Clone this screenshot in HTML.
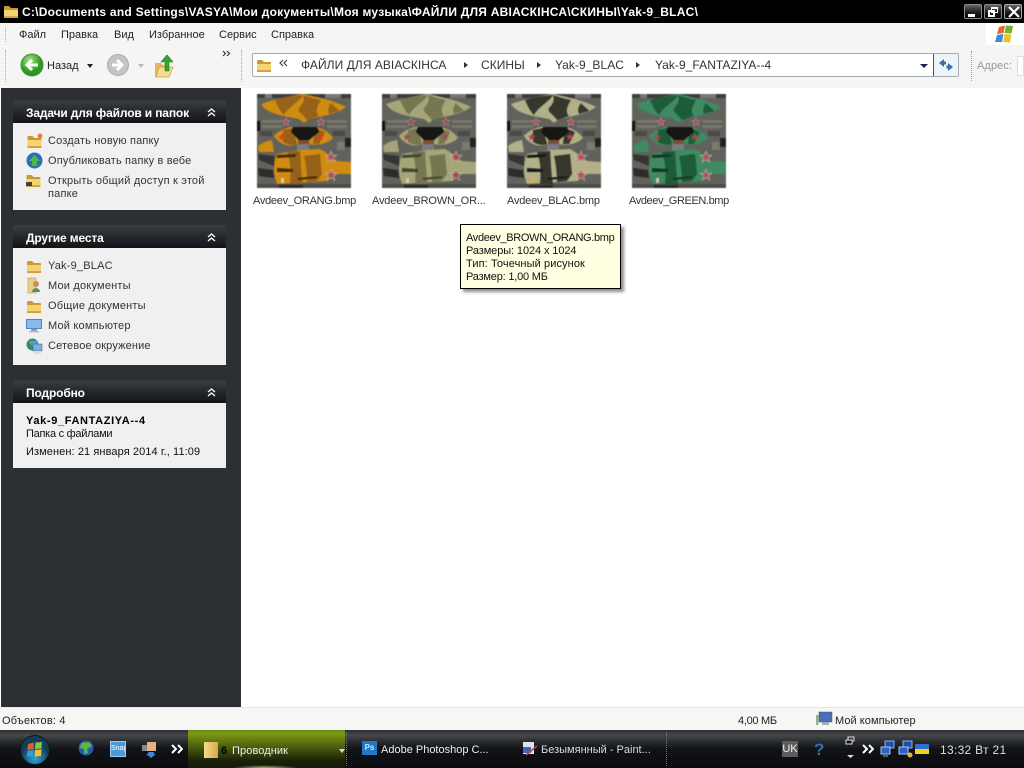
<!DOCTYPE html>
<html><head><meta charset="utf-8"><style>
html,body{margin:0;padding:0;width:1024px;height:768px;overflow:hidden;background:#fff}
body{position:relative;font:11px "Liberation Sans","Noto Sans CJK SC",sans-serif;color:#222}
.a,.t{position:absolute}
.t{white-space:nowrap;line-height:13px;margin-top:1px}
.h{position:absolute;left:13px;width:213px;height:23px;background:linear-gradient(#3a3e44,#25282d 50%,#121417)}
.ht{position:absolute;left:13px;top:6px;color:#fff;font-weight:bold;font-size:12px;letter-spacing:-.15px;white-space:nowrap;line-height:14px}
.b{position:absolute;left:13px;width:213px;background:#f0f0f0}
svg.a{overflow:visible}
.th{filter:blur(.5px)}
.w{position:absolute;top:4px;width:18px;height:15px;background:linear-gradient(#666,#222 50%,#000);border:1px solid #888;box-sizing:border-box;border-radius:2px}
.ad{font-size:12px;letter-spacing:.05px;color:#333}
</style></head><body>
<svg width="0" height="0" style="position:absolute"><defs>
<symbol id="fold" viewBox="0 0 16 16"><path d="M1 4q0-1 1-1h4l2 2h6q1 0 1 1v9H1z" fill="#c99a34"/><path d="M1 7h14v6.500q0 1-1 1H2q-1 0-1-1z" fill="#f3d472"/><path d="M1 13h14v1.500H1z" fill="#d8a83c"/></symbol>
<symbol id="dch" viewBox="0 0 12 10"><path d="M1 1L5 5 1 9M7 1L11 5 7 9" fill="none" stroke="#fff" stroke-width="2"/></symbol>
<symbol id="up" viewBox="0 0 9 9"><path d="M1 4L4.500 1 8 4M1 8L4.500 5 8 8" fill="none" stroke="#fff" stroke-width="1.300"/></symbol>
<path id="star" d="M0-5L1.500-1.500 5-1.500 2.200.8 3.200 4.500 0 2.200-3.200 4.500-2.200.8-5-1.500-1.500-1.500Z"/>
<symbol id="skin" viewBox="0 0 94 94">
<rect width="94" height="94" fill="#62625c"/>
<rect y="0" width="94" height="4" fill="#3c3c3a"/><rect x="8" width="7" height="4" fill="#77777a"/><rect x="68" width="16" height="4" fill="#77777a"/>
<rect x="5" y="26" width="20" height="8" fill="#77766a"/><rect x="70" y="26" width="20" height="8" fill="#77766a"/>
<path d="M5 30h20M70 30h20" stroke="#4a4a44"/>
<rect x="0" y="27" width="3" height="10" fill="#111"/><rect x="88" y="44" width="6" height="9" fill="#222"/>
<rect x="76" y="37" width="12" height="5" fill="#4a4a46"/><rect x="3" y="37" width="12" height="5" fill="#4a4a46"/><rect x="80" y="48" width="8" height="8" fill="#7a7a72"/>
<path d="M4 10C18 5 33 2 46 0C60 3 76 6 89 13C80 20 66 22 52 25L47 29L42 25C26 22 10 20 4 10Z" style="fill:var(--a)"/>
<path d="M18 6C25 3 38 2 46 1C42 8 32 12 27 21C22 16 20 10 18 6ZM46 1C52 3 58 5 64 6C60 12 58 18 62 22L50 26C46 20 40 18 42 14C46 10 48 6 46 1ZM74 9C76 12 80 14 82 17L72 20C70 15 72 12 74 9Z" style="fill:var(--b)"/>
<path d="M17 42C22 36 32 32 38 33L47 44L56 33C64 33 72 38 76 44C70 50 60 52 52 50L47 52L40 50C32 54 22 50 17 42Z" style="fill:var(--a)"/>
<path d="M26 36L36 34L40 50C34 52 30 50 26 48ZM58 34L68 38L62 50L56 50Z" style="fill:var(--b)"/>
<path d="M36 33L60 33L62 38L52 46L47 50L42 46L34 38Z" fill="#161614"/>
<rect x="41" y="46" width="11" height="4" fill="#7a5130"/><rect x="40" y="50" width="12" height="8" fill="#7a7b7e"/>
<path d="M1 52C6 48 11 47 15 46L17 58L2 58Z" style="fill:var(--a)"/><path d="M1 60L17 62V72L2 66Z" fill="#343432"/><path d="M1 74L16 76 17 84 2 82Z" fill="#2c2c2a"/>
<path d="M20 60L44 56L63 55L68 58L80 67L94 68V80H80L70 87L20 90C16 80 16 70 20 60Z" style="fill:var(--a)"/>
<path d="M30 58L43 57C44 68 44 80 46 90L33 90C34 80 34 68 30 58ZM47 62L63 60L65 80L60 87L50 88C50 80 49 70 47 62Z" style="fill:var(--b)"/>
<path d="M20 61L40 60 38 63 20 64ZM20 74L36 75 36 78 20 78ZM40 84L60 82 60 84 42 86Z" style="fill:var(--c)"/>
<rect y="90" width="94" height="4" fill="#4c4c48"/><rect x="22" y="91" width="24" height="3" fill="#2a2a28"/>
<use href="#star" transform="translate(29 28) scale(.85)" style="fill:var(--s)" stroke="#b9a8a0" stroke-width=".5"/>
<use href="#star" transform="translate(64 28) scale(.85)" style="fill:var(--s)" stroke="#b9a8a0" stroke-width=".5"/>
<use href="#star" transform="translate(25 43) scale(.8)" style="fill:var(--r)"/>
<use href="#star" transform="translate(63 43) scale(.8)" style="fill:var(--r)"/>
<use href="#star" transform="translate(74 63) scale(1.150)" style="fill:var(--s)" stroke="#d0c0b8" stroke-width=".5"/>
<use href="#star" transform="translate(74 81) scale(1.150)" style="fill:var(--s)" stroke="#d0c0b8" stroke-width=".5"/>
<rect x="24" y="84" width="3" height="5" style="fill:var(--w)"/>
</symbol>
</defs></svg>

<!-- Title bar -->
<div class="a" style="left:0;top:0;width:1024px;height:23px;background:#000"></div>
<svg class="a" style="left:3px;top:3px" width="16" height="16"><use href="#fold"/></svg>
<div class="t" style="left:22px;top:5px;color:#fff;font-weight:bold;font-size:12px;letter-spacing:.25px">C:\Documents and Settings\VASYA\Мои документы\Моя музыка\ФАЙЛИ ДЛЯ АВIАСКIНСА\СКИНЫ\Yak-9_BLAC\</div>
<div class="w" style="left:964px"><div class="a" style="left:3px;top:9px;width:7px;height:3px;background:#fff"></div></div>
<div class="w" style="left:984px"><div class="a" style="left:3px;top:5px;width:7px;height:7px;box-sizing:border-box;border:2px solid #fff"></div><div class="a" style="left:6px;top:2px;width:7px;height:6px;box-sizing:border-box;border:1px solid #fff;border-top-width:2px"></div></div>
<div class="w" style="left:1004px;border-color:#aaa"><svg class="a" style="left:3px;top:1px" width="12" height="12"><path d="M1 1L11 11M11 1L1 11" stroke="#fff" stroke-width="2.200"/></svg></div>

<!-- Menu & toolbar -->
<div class="a" style="left:0;top:23px;width:1024px;height:65px;background:#f5f5f4"></div>
<div class="a" style="left:5px;top:27px;height:15px;border-left:1px dotted #aaa"></div>
<div class="a" style="left:5px;top:50px;height:32px;border-left:1px dotted #aaa"></div>
<div class="a" style="left:241px;top:50px;height:32px;border-left:1px dotted #aaa"></div>
<div class="t" style="left:19px;top:28px">Файл</div>
<div class="t" style="left:61px;top:28px">Правка</div>
<div class="t" style="left:114px;top:28px">Вид</div>
<div class="t" style="left:149px;top:28px">Избранное</div>
<div class="t" style="left:219px;top:28px">Сервис</div>
<div class="t" style="left:271px;top:28px">Справка</div>
<div class="a" style="left:986px;top:23px;width:38px;height:22px;background:#fff"></div>
<svg class="a" style="left:995px;top:24px" width="20" height="20" viewBox="0 0 20 20"><path d="M4 3L10 1.500 8.500 9 2 10Z" fill="#e8632a"/><path d="M11 1.500L18 2 16.500 9.500 9.500 9Z" fill="#6fb23a"/><path d="M2 11L8.500 10 7 18 0 18Z" fill="#3a8bd8"/><path d="M9.500 10L16.500 10.500 15 18.500 8 18Z" fill="#f4bf2c"/></svg>

<svg class="a" style="left:20px;top:53px" width="24" height="24"><defs><radialGradient id="g1" cx=".4" cy=".3"><stop offset="0" stop-color="#a8e680"/><stop offset="1" stop-color="#2a9a20"/></radialGradient></defs><circle cx="12" cy="12" r="11" fill="url(#g1)" stroke="#4a8a40"/><path d="M18 12H8M12 7l-5 5 5 5" stroke="#fff" stroke-width="3" fill="none"/></svg>
<div class="t" style="left:47px;top:59px">Назад</div>
<div class="a" style="left:87px;top:64px;border:3px solid transparent;border-top:4px solid #222"></div>
<svg class="a" style="left:107px;top:54px" width="22" height="22"><circle cx="11" cy="11" r="10.500" fill="#c4c4c4" stroke="#aaa"/><path d="M5 11H14M10 6l5 5-5 5" stroke="#fff" stroke-width="3" fill="none"/></svg>
<div class="a" style="left:138px;top:64px;border:3px solid transparent;border-top:4px solid #bbb"></div>
<svg class="a" style="left:154px;top:54px" width="20" height="24" viewBox="0 0 20 24"><path d="M1 9h6l2 2h5l-1 12H1z" fill="#e2bb58"/><path d="M2 23l3-10h14l-4 10z" fill="#f6dd8e" stroke="#c79c3a" stroke-width=".7"/><path d="M11 17V8H7l6-7 6 7h-4v9z" fill="#36a52c" stroke="#1f7a20" stroke-width=".6"/></svg>
<svg class="a" style="left:223px;top:51px" width="7" height="5"><path d="M0 0L2.500 2.500 0 5M4 0L6.500 2.500 4 5" fill="none" stroke="#333" stroke-width="1.200"/></svg>

<!-- Address bar -->
<div class="a" style="left:252px;top:53px;width:707px;height:24px;box-sizing:border-box;background:#fff;border:1px solid #a3abb3;border-radius:2px"></div>
<svg class="a" style="left:256px;top:57px" width="16" height="16"><use href="#fold"/></svg>
<svg class="a" style="left:279px;top:60px" width="8" height="6"><path d="M4 0L1 3 4 6M8 0L5 3 8 6" fill="none" stroke="#444" stroke-width="1.200"/></svg>
<div class="t ad" style="left:301px;top:58px">ФАЙЛИ ДЛЯ АВIАСКIНСА</div>
<div class="a" style="left:464px;top:62px;border:3px solid transparent;border-left:4px solid #333"></div>
<div class="t ad" style="left:481px;top:58px">СКИНЫ</div>
<div class="a" style="left:537px;top:62px;border:3px solid transparent;border-left:4px solid #333"></div>
<div class="t ad" style="left:555px;top:58px">Yak-9_BLAC</div>
<div class="a" style="left:636px;top:62px;border:3px solid transparent;border-left:4px solid #333"></div>
<div class="t ad" style="left:655px;top:58px">Yak-9_FANTAZIYA--4</div>
<div class="a" style="left:920px;top:64px;border:4px solid transparent;border-top:4px solid #12205a"></div>
<div class="a" style="left:933px;top:54px;width:24px;height:22px;background:#eef3f7;border-left:1px solid #456"></div>
<svg class="a" style="left:938px;top:58px" width="16" height="14"><path d="M1 5L6 1V3.500H8V6.500H6V9Z" fill="#3a6cb0"/><path d="M15 9L10 13V10.500H8.500V7.500H10V5Z" fill="#3a6cb0"/></svg>
<div class="a" style="left:971px;top:51px;height:30px;border-left:1px dotted #999"></div>
<div class="t" style="left:977px;top:59px;color:#999;letter-spacing:.1px">Адрес:</div>
<div class="a" style="left:1017px;top:56px;width:7px;height:20px;background:#fff;border:1px solid #ddd;box-sizing:border-box"></div>

<!-- Sidebar -->
<div class="a" style="left:1px;top:88px;width:240px;height:619px;background:#2c2f34"></div>
<div class="h" style="top:100px"><div class="ht">Задачи для файлов и папок</div></div>
<svg class="a" style="left:207px;top:108px" width="9" height="9"><use href="#up"/></svg>
<div class="b" style="top:123px;height:87px"></div>
<svg class="a" style="left:26px;top:133px" width="17" height="16"><use href="#fold"/><circle cx="14" cy="3" r="2.500" fill="#f08030"/></svg>
<div class="t" style="left:48px;top:134px;letter-spacing:.18px;color:#333">Создать новую папку</div>
<svg class="a" style="left:26px;top:152px" width="17" height="17"><circle cx="8.500" cy="8.500" r="8" fill="#2a6fb8"/><path d="M8.500 3L14 9H11V14H6V9H3Z" fill="#4cb848"/></svg>
<div class="t" style="left:48px;top:154px;letter-spacing:.16px;color:#333">Опубликовать папку в вебе</div>
<svg class="a" style="left:25px;top:172px" width="17" height="16"><use href="#fold"/><rect x="1" y="10" width="6" height="4" fill="#444"/></svg>
<div class="t" style="left:48px;top:174px;letter-spacing:.2px;color:#333">Открыть общий доступ к этой</div>
<div class="t" style="left:48px;top:187px;letter-spacing:.2px;color:#333">папке</div>

<div class="h" style="top:225px"><div class="ht">Другие места</div></div>
<svg class="a" style="left:207px;top:233px" width="9" height="9"><use href="#up"/></svg>
<div class="b" style="top:248px;height:117px"></div>
<svg class="a" style="left:26px;top:258px" width="16" height="16"><use href="#fold"/></svg>
<div class="t" style="left:48px;top:259px;letter-spacing:.2px;color:#333">Yak-9_BLAC</div>
<svg class="a" style="left:26px;top:277px" width="16" height="17"><path d="M2 1h8v15H2z" fill="#e8cf8a" stroke="#c6a95c" stroke-width=".7"/><circle cx="10" cy="7" r="3" fill="#c09060"/><path d="M6 15c0-5 8-5 8 0z" fill="#5a8a70"/></svg>
<div class="t" style="left:48px;top:279px;letter-spacing:.2px;color:#333">Мои документы</div>
<svg class="a" style="left:26px;top:298px" width="16" height="16"><use href="#fold"/></svg>
<div class="t" style="left:48px;top:299px;letter-spacing:.2px;color:#333">Общие документы</div>
<svg class="a" style="left:26px;top:318px" width="16" height="15"><rect x="0" y="1" width="16" height="10" fill="#4b86c8"/><rect x="1" y="2" width="14" height="8" fill="#8cb8e4"/><rect x="5" y="11" width="6" height="2" fill="#9a9a9a"/><rect x="3" y="13" width="10" height="1.500" fill="#bbb"/></svg>
<div class="t" style="left:48px;top:319px;letter-spacing:.2px;color:#333">Мой компьютер</div>
<svg class="a" style="left:26px;top:338px" width="17" height="17"><circle cx="6.500" cy="6.500" r="6" fill="#3c8a5a"/><path d="M2 3C5 2 8 4 11 2L12 7 7 9Z" fill="#4ba0e0"/><rect x="7" y="6" width="9" height="7" fill="#7ab0e8" stroke="#456" stroke-width=".5"/><rect x="8" y="13" width="7" height="3" fill="#dde"/></svg>
<div class="t" style="left:48px;top:339px;letter-spacing:.15px;color:#333">Сетевое окружение</div>

<div class="h" style="top:380px"><div class="ht">Подробно</div></div>
<svg class="a" style="left:207px;top:388px" width="9" height="9"><use href="#up"/></svg>
<div class="b" style="top:403px;height:65px"></div>
<div class="t" style="left:26px;top:414px;font-weight:bold;letter-spacing:.64px;color:#000">Yak-9_FANTAZIYA--4</div>
<div class="t" style="left:26px;top:427px;color:#111;letter-spacing:-.27px">Папка с файлами</div>
<div class="t" style="left:26px;top:445px;color:#111;letter-spacing:.09px">Изменен: 21 января 2014 г., 11:09</div>

<!-- Thumbnails -->
<svg class="a th" style="left:257px;top:94px;--a:#d08c10;--b:#96621a;--c:#4a2a0a;--s:#b0505a;--r:#d8401c;--w:#e8c8a0" width="94" height="94"><use href="#skin"/></svg>
<svg class="a th" style="left:382px;top:94px;--a:#a5a678;--b:#767750;--c:#44452e;--s:#a04a50;--r:#a04a50;--w:#d8c8a0" width="94" height="94"><use href="#skin"/></svg>
<svg class="a th" style="left:507px;top:94px;--a:#b2b088;--b:#36372c;--c:#1c1c16;--s:#b4505a;--r:#b0404a;--w:#e0b030" width="94" height="94"><use href="#skin"/></svg>
<svg class="a th" style="left:632px;top:94px;--a:#3f8a62;--b:#1d5c38;--c:#123a24;--s:#b0505a;--r:#a84a4a;--w:#d0c8a0" width="94" height="94"><use href="#skin"/></svg>
<div class="t" style="left:253px;top:194px;letter-spacing:-.28px;color:#333">Avdeev_ORANG.bmp</div>
<div class="t" style="left:372px;top:194px;letter-spacing:-.17px;color:#333">Avdeev_BROWN_OR...</div>
<div class="t" style="left:507px;top:194px;letter-spacing:-.2px;color:#333">Avdeev_BLAC.bmp</div>
<div class="t" style="left:629px;top:194px;letter-spacing:-.4px;color:#333">Avdeev_GREEN.bmp</div>

<!-- Tooltip -->
<div class="a" style="left:460px;top:224px;width:161px;height:65px;box-sizing:border-box;background:#ffffe1;border:1px solid #000;box-shadow:3px 3px 3px rgba(0,0,0,.45)"></div>
<div class="t" style="left:466px;top:231px;color:#111;letter-spacing:-.33px">Avdeev_BROWN_ORANG.bmp</div>
<div class="t" style="left:466px;top:244px;color:#111;letter-spacing:-.1px">Размеры: 1024 x 1024</div>
<div class="t" style="left:466px;top:257px;color:#111;letter-spacing:.1px">Тип: Точечный рисунок</div>
<div class="t" style="left:466px;top:270px;color:#111;letter-spacing:-.2px">Размер: 1,00 МБ</div>

<!-- Status bar -->
<div class="a" style="left:0;top:707px;width:1024px;height:23px;background:#f6f6f5;border-top:1px solid #e6e6e6;box-sizing:border-box"></div>
<div class="t" style="left:2px;top:714px;color:#222;letter-spacing:.2px">Объектов: 4</div>
<div class="t" style="left:738px;top:714px;color:#222;letter-spacing:-.3px">4,00 МБ</div>
<svg class="a" style="left:816px;top:711px" width="16" height="16"><rect x="0" y="4" width="2.500" height="10" fill="#8ab48a"/><rect x="3" y="1" width="13" height="10" fill="#4a6fb8" stroke="#556" stroke-width=".5"/><rect x="6" y="11" width="7" height="3" fill="#aaa"/></svg>
<div class="t" style="left:835px;top:714px;color:#222;letter-spacing:.05px">Мой компьютер</div>

<!-- Taskbar -->
<div class="a" style="left:0;top:730px;width:1024px;height:38px;background:linear-gradient(#2c2f32 0,#46494c 14%,#2a2c30 30%,#111317 50%,#0b0c10 100%)"></div>
<svg class="a" style="left:20px;top:735px" width="30" height="30" viewBox="0 0 30 30"><defs><radialGradient id="o" cx=".5" cy=".8"><stop offset="0" stop-color="#2ea6d8"/><stop offset="1" stop-color="#123c58"/></radialGradient></defs><circle cx="15" cy="15" r="14.500" fill="url(#o)" stroke="#0a1a24"/><path d="M8 9L14 7.500 13.500 14 7.500 15Z" fill="#e8592a"/><path d="M15.500 7.500L22 7 21.500 13.500 15 14Z" fill="#8cc63f"/><path d="M7.500 16L13.500 15 13 21 7 22Z" fill="#3a9ae0"/><path d="M15 15L21.500 14.500 21 21 14.500 21.500Z" fill="#f6c02c"/></svg>
<svg class="a" style="left:78px;top:740px" width="16" height="16"><circle cx="8" cy="8" r="7.500" fill="#2558b8"/><path d="M3 4C6 1 9 3 11 2L14 6 9 9 10 13 6 14 6 9 2 8Z" fill="#5cb840"/></svg>
<div class="a" style="left:110px;top:741px;width:16px;height:16px;background:#4a9bd8;border:1px solid #9ccbee;box-sizing:border-box;color:#fff;font-size:7px;line-height:13px;text-align:center;overflow:hidden">Snap</div>
<svg class="a" style="left:141px;top:741px" width="17" height="17"><rect x="1" y="4" width="5" height="6" fill="#888"/><rect x="6" y="1" width="9" height="9" fill="#e8b080"/><path d="M7 11h6v2h2l-5 4-5-4h2z" fill="#3a86d8"/></svg>
<svg class="a" style="left:171px;top:744px" width="12" height="10"><use href="#dch"/></svg>

<div class="a" style="left:188px;top:730px;width:157px;height:38px;background:linear-gradient(#6f8a12 0,#7c9a14 10%,#4a5c0c 45%,#1c220a 80%,#14180a 100%)"></div>
<div class="a" style="left:230px;top:765px;width:70px;height:3px;background:radial-gradient(ellipse at bottom,#a8b880,rgba(100,130,30,0) 70%)"></div>
<div class="a" style="left:204px;top:742px;width:14px;height:16px;background:linear-gradient(90deg,#f6d98c,#d8a850)"></div>
<div class="t" style="left:221px;top:744px;color:#000;font-weight:bold;font-size:11px">6</div>
<div class="t" style="left:232px;top:744px;color:#eee;letter-spacing:.1px">Проводник</div>
<div class="a" style="left:339px;top:749px;border:3px solid transparent;border-top:4px solid #ddd"></div>
<div class="a" style="left:346px;top:732px;height:34px;border-left:1px dotted #777"></div>
<div class="a" style="left:362px;top:741px;width:15px;height:14px;background:#1f78c8;color:#cfe8ff;font-size:8px;font-weight:bold;line-height:14px;text-align:center">Ps</div>
<div class="t" style="left:381px;top:743px;color:#eee">Adobe Photoshop C...</div>
<svg class="a" style="left:522px;top:741px" width="16" height="16"><rect x="1" y="1" width="11" height="12" fill="#dde4f0"/><rect x="1" y="6" width="8" height="6" fill="#3a66b8"/><path d="M4 14L15 5" stroke="#c04040" stroke-width="1.500"/></svg>
<div class="t" style="left:541px;top:743px;color:#ddd">Безымянный - Paint...</div>
<div class="a" style="left:666px;top:732px;height:34px;border-left:1px dotted #777"></div>

<div class="a" style="left:782px;top:741px;width:16px;height:16px;background:#5c5c5c;color:#eee;font-size:11px;line-height:16px;text-align:center">UK</div>
<div class="t" style="left:814px;top:740px;color:#2f6fb8;font-weight:bold;font-size:17px;line-height:18px">?</div>
<svg class="a" style="left:846px;top:737px" width="10" height="22"><rect x="2" y="0" width="6" height="4" fill="none" stroke="#ddd"/><rect x="0" y="3" width="6" height="4" fill="#111" stroke="#ddd"/><path d="M1 18h7l-3.500 3z" fill="#ddd"/></svg>
<svg class="a" style="left:862px;top:744px" width="12" height="10"><use href="#dch"/></svg>
<svg class="a" style="left:880px;top:741px" width="16" height="16"><rect x="5" y="0" width="9" height="7" fill="#1c4fb0" stroke="#8cb0e8"/><rect x="1" y="6" width="9" height="7" fill="#2a62c8" stroke="#a8c8f0"/><path d="M3 15h5" stroke="#aaa"/></svg>
<svg class="a" style="left:898px;top:741px" width="16" height="17"><rect x="5" y="0" width="9" height="7" fill="#1c4fb0" stroke="#8cb0e8"/><rect x="1" y="6" width="9" height="7" fill="#2a62c8" stroke="#a8c8f0"/><circle cx="12" cy="14" r="2.500" fill="#e8b83c"/></svg>
<div class="a" style="left:915px;top:744px;width:14px;height:5px;background:#2f6fd0"></div>
<div class="a" style="left:915px;top:749px;width:14px;height:5px;background:#f2d020"></div>
<div class="t" style="left:940px;top:743px;color:#ddd;font-size:12px;letter-spacing:.3px">13:32 Вт 21</div>
</body></html>
